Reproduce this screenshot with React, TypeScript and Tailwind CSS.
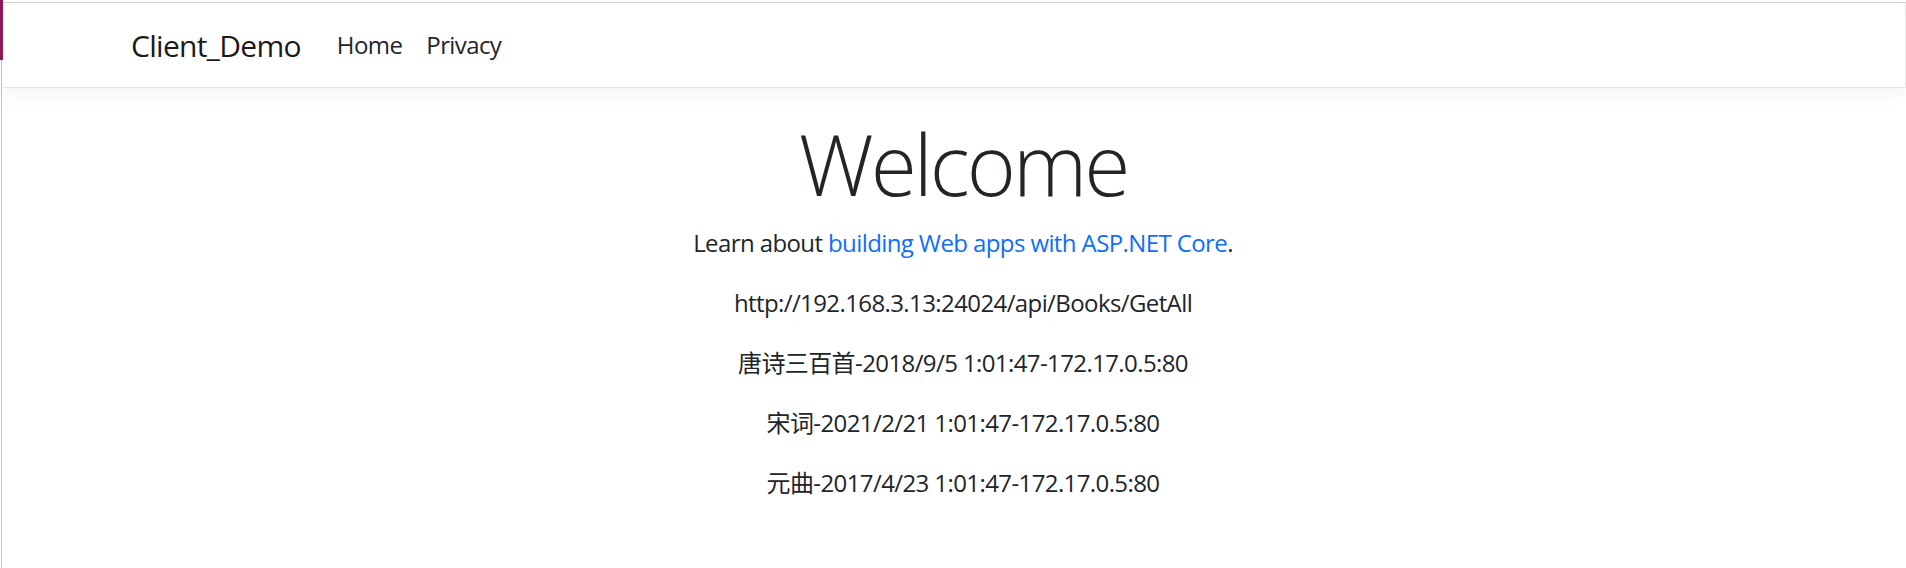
const API_URL = "http://192.168.3.13:24024/api/Books/GetAll";

const books = [
  "唐诗三百首-2018/9/5 1:01:47-172.17.0.5:80",
  "宋词-2021/2/21 1:01:47-172.17.0.5:80",
  "元曲-2017/4/23 1:01:47-172.17.0.5:80",
];

const Header = () => (
  <header className="border-r border-[#ececec]">
    <nav className="relative z-10 flex items-center border-b border-[#dee2e6] bg-white py-[12px] pl-[128px] shadow-[0_6px_18px_rgba(0,0,0,0.05)]">
      <a className="mr-[24px] py-[7.5px] text-[30px] leading-[45px] tracking-[-0.7px] text-[#1a1a1a]">
        Client_Demo
      </a>
      <ul className="flex">
        <li>
          <a className="block px-[12px] py-[12px] text-[24px] leading-[36px] tracking-[-0.6px] text-[#212529]">
            Home
          </a>
        </li>
        <li>
          <a className="block px-[12px] py-[12px] text-[24px] leading-[36px] tracking-[-0.6px] text-[#212529]">
            Privacy
          </a>
        </li>
      </ul>
    </nav>
  </header>
);

export default function App() {
  return (
    <div className="flex h-[568px] w-full overflow-hidden bg-white font-['Open_Sans','Noto_Sans_CJK_SC',sans-serif] text-[#212529]">
      {/* browser edge */}
      <div className="flex w-[3px] flex-col">
        <div className="h-[60px] w-[3px] bg-[#8c1d55]" />
        <div className="ml-px w-px flex-1 bg-[#c8c8c8]" />
      </div>

      <div className="flex flex-1 flex-col pt-[2px]">
        <div className="h-px bg-[#d2d2d2]" />
        <Header />

        <main className="mt-[24px] pl-[17px] text-center tracking-[-0.6px]">
          <h1 className="mb-[10px] pt-[2px] text-[84px] font-light leading-[1.2] tracking-[-3px]">
            Welcome
          </h1>
          <p className="mb-[24px] text-[24px] leading-[36px]">
            Learn about{" "}
            <a className="text-[#0d6efd]">building Web apps with ASP.NET Core</a>.
          </p>
          <p className="mb-[24px] text-[24px] leading-[36px]">{API_URL}</p>
          {books.map((b) => (
            <p key={b} className="mb-[24px] text-[24px] leading-[36px]">
              {b}
            </p>
          ))}
        </main>
      </div>
    </div>
  );
}
